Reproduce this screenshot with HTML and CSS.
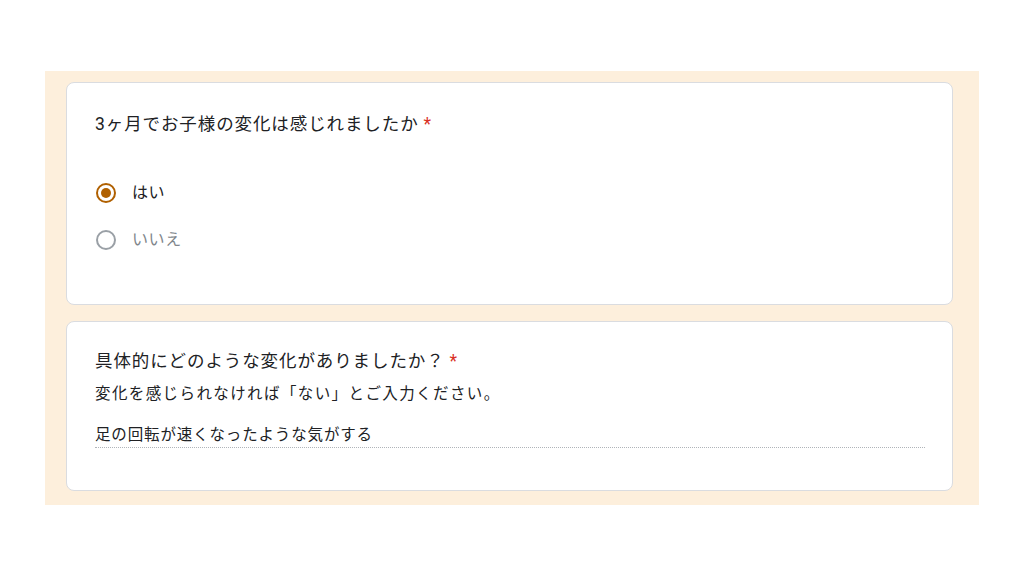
FILE: index.html
```html
<!DOCTYPE html>
<html lang="ja">
<head>
<meta charset="utf-8">
<title>Form</title>
<link rel="stylesheet" href="styles.css">
</head>
<body>
<div class="panel">
  <div class="card card-q1">
    <div class="title">3ヶ月でお子様の変化は感じれましたか<span class="req">*</span></div>
    <div class="options">
      <div class="option">
        <span class="radio radio-on"><span class="dot"></span></span>
        <span class="label">はい</span>
      </div>
      <div class="option">
        <span class="radio"></span>
        <span class="label label-off">いいえ</span>
      </div>
    </div>
  </div>
  <div class="card card-q2">
    <div class="title">具体的にどのような変化がありましたか？<span class="req">*</span></div>
    <div class="desc">変化を感じられなければ「ない」とご入力ください。</div>
    <div class="answer">足の回転が速くなったような気がする</div>
  </div>
</div>
</body>
</html>
```
FILE: styles.css
```css
html, body {
  margin: 0;
  padding: 0;
  background: #ffffff;
}
body {
  padding: 71px 0 0 45px;
  font-family: Roboto, "Noto Sans CJK JP", sans-serif;
  color: #202124;
}
.panel {
  width: 934px;
  box-sizing: border-box;
  background: #fdefdc;
  padding: 11px 26px 14px 21px;
  display: flex;
  flex-direction: column;
  gap: 16px;
}
.card {
  background: #fff;
  border: 1px solid #dadce0;
  border-radius: 8px;
  box-sizing: border-box;
}
.card-q1 {
  padding: 29px 27px 52px 28px;
}
.card-q2 {
  padding: 27px 27px 42px 28px;
}
.title {
  font-size: 17.5px;
  line-height: 24px;
  letter-spacing: 0.9px;
}
.req {
  color: #d93025;
  margin-left: 5px;
}
.options {
  margin-top: 45px;
  display: flex;
  flex-direction: column;
  gap: 23px;
}
.option {
  display: flex;
  align-items: center;
  height: 24px;
}
.radio {
  width: 20px;
  height: 20px;
  box-sizing: border-box;
  border: 2px solid #9aa0a6;
  border-radius: 50%;
  display: flex;
  align-items: center;
  justify-content: center;
  margin-left: 1px;
}
.radio-on {
  border-color: #b06000;
}
.dot {
  width: 10px;
  height: 10px;
  border-radius: 50%;
  background: #b06000;
}
.label {
  margin-left: 16px;
  font-size: 16px;
  line-height: 20px;
  letter-spacing: 0.6px;
  color: #202124;
}
.label-off {
  color: #80868b;
}
.desc {
  margin-top: 11px;
  font-size: 15.5px;
  line-height: 20px;
  letter-spacing: 1.4px;
}
.answer {
  margin-top: 21px;
  font-size: 15.5px;
  line-height: 20px;
  letter-spacing: 0.85px;
  padding-bottom: 2px;
  border-bottom: 1px dotted #b0b4b9;
}
```
